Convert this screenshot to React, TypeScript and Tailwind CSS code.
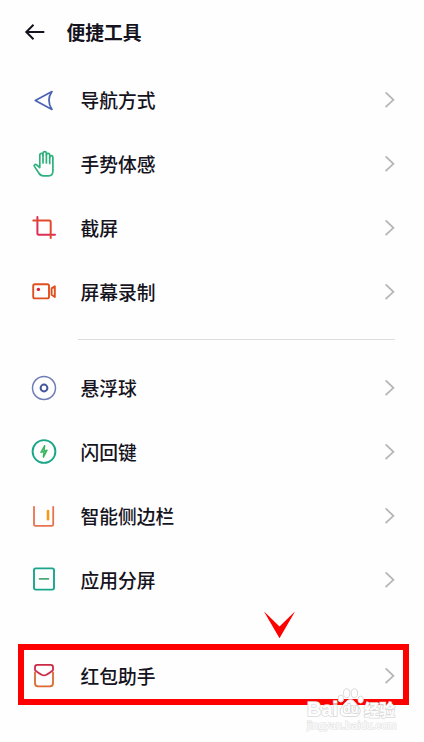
import type { ReactNode } from "react";

type Item = { label: string; icon: ReactNode };

const NAV_ITEMS: Item[] = [
    {
        label: "导航方式",
        icon: <path d="M5.3 14.4 22 5.6Q15.8 14.4 22 23.4Z" stroke="#4a62b5" strokeWidth={1.7} />,
    },
    {
        label: "手势体感",
        icon: (
            <g stroke="#2fb07c" strokeWidth={1.7}>
                <path d="M9.8 17.5V5a1.6 1.6 0 0 1 3.2 0v-1.6a1.7 1.7 0 0 1 3.4 0V5a1.6 1.6 0 0 1 3.3 0v2.2a1.6 1.6 0 0 1 3.2 0V21c0 3-1.6 4.8-4.2 4.8h-5.2c-2.2 0-3.6-.9-4.7-2.8L4.4 16.4c-.8-1.5 1-2.6 2.2-1.5z" />
                <path d="M13 5v8M16.4 5v8M19.7 7v6.5" />
            </g>
        ),
    },
    {
        label: "截屏",
        icon: (
            <g strokeWidth={2}>
                <path d="M7.4 3v16.6q0 1.2 1.2 1.2H25" stroke="#dc2f55" />
                <path d="M3.3 6.6h16.2q1.2 0 1.2 1.2V24" stroke="#e04a2c" />
            </g>
        ),
    },
    {
        label: "屏幕录制",
        icon: (
            <g stroke="#e0501f" strokeWidth={1.9}>
                <rect x={3.2} y={6.2} width={15.8} height={14.2} rx={1.6} />
                <path d="M24.8 8.2v10.8l-3.2-2.2v-6.4z" />
                <circle cx={8.4} cy={11.4} r={1.7} fill="#d9232e" stroke="none" />
            </g>
        ),
    },
];

const TOOL_ITEMS: Item[] = [
    {
        label: "悬浮球",
        icon: (
            <>
                <circle cx={14} cy={14} r={11.5} stroke="#6f7fb5" strokeWidth={1.5} />
                <circle cx={14} cy={14} r={3.4} stroke="#43569c" strokeWidth={2} />
            </>
        ),
    },
    {
        label: "闪回键",
        icon: (
            <>
                <circle cx={14} cy={13.5} r={11.4} stroke="#1aa687" strokeWidth={1.9} />
                <path d="M14.6 7.8 11 14.4 17 12.2 13.4 19.2M14.6 7.8 14 13M13.4 19.2 14 14" stroke="#3cb55f" strokeWidth={1.5} />
            </>
        ),
    },
    {
        label: "智能侧边栏",
        icon: (
            <>
                <path d="M4 4.8v17.4q0 1.6 1.6 1.6h16q1.6 0 1.6-1.6V4.8" stroke="#e87352" strokeWidth={1.8} />
                <path d="M18 9v8.2" stroke="#f59a14" strokeWidth={2.6} />
            </>
        ),
    },
    {
        label: "应用分屏",
        icon: (
            <>
                <rect x={4} y={2.4} width={20} height={21.2} rx={1.8} stroke="#1ba58b" strokeWidth={1.9} />
                <path d="M9.5 12.9h9" stroke="#4aa878" strokeWidth={1.6} />
            </>
        ),
    },
];

const RED_PACKET: Item = {
    label: "红包助手",
    icon: (
        <g strokeWidth={1.8}>
            <path d="M5 10.4v10.9q0 3 3 3h12q3 0 3-3V10.4" stroke="#d96a32" />
            <path d="M5 8V5.2Q5 2.8 7.4 2.8h13.2Q23 2.8 23 5.2V8q-1 1.4-6.6 4.8-2.4 1.2-4.8 0Q6 9.4 5 8z" stroke="#cc2946" />
        </g>
    ),
};

function Row({ item }: { item: Item }) {
    return (
        <>
            <svg className="h-7 w-7 shrink-0" viewBox="0 0 28 28" fill="none" strokeLinecap="round" strokeLinejoin="round">
                {item.icon}
            </svg>
            <span className="mb-px ml-[22.5px] flex-1 leading-7">{item.label}</span>
            <svg className="h-5 w-3 shrink-0" viewBox="0 0 12 20" fill="none" stroke="#b4b4b8" strokeWidth={1.7}>
                <path d="M2.6 2.4 10.4 9.8 2.6 17.2" />
            </svg>
        </>
    );
}

function Section({ items }: { items: Item[] }) {
    return (
        <ul>
            {items.map((item) => (
                <li key={item.label} className="flex h-16 items-center pr-[29px] pl-[30px]">
                    <Row item={item} />
                </li>
            ))}
        </ul>
    );
}

function Watermark() {
    return (
        <div className="absolute top-[686px] left-[306px] h-[48px] w-[94px] font-['Liberation_Sans',sans-serif] text-white [paint-order:stroke_fill]">
            <svg className="absolute top-px left-[31px] h-[31px] w-[27px] [paint-order:normal]" viewBox="0 0 28 32" fill="#ffffff" stroke="#d6d6d6" strokeWidth={1}>
                <ellipse cx={4} cy={12} rx={2.8} ry={3.6} />
                <ellipse cx={10} cy={6.4} rx={3.3} ry={4.6} />
                <ellipse cx={18} cy={6.4} rx={3.3} ry={4.6} />
                <ellipse cx={24.5} cy={13} rx={2.8} ry={3.6} />
                <path d="M14 13c3.5 0 5 3.5 8 6.5 3.6 3.8 2.4 11-3.2 11H8.5C3 30.5 1.6 24 5.5 19.5c3-3 5-6.5 8.5-6.5z" />
            </svg>
            <span className="absolute top-[13px] left-px text-[20px] leading-5 font-bold [-webkit-text-stroke:1.6px_#dadada]">Bai</span>
            <span className="absolute top-[15px] left-[37px] text-[12.5px] leading-4 font-bold [-webkit-text-stroke:1.6px_#d4d4d4]">du</span>
            <span className="absolute top-[13px] left-[58px] font-['Noto_Sans_CJK_SC',sans-serif] text-[15.5px] leading-5 font-bold [-webkit-text-stroke:1.5px_#dadada]">经验</span>
            <span className="absolute top-[33px] left-px text-[11px] leading-[12px] tracking-[0.05px] [-webkit-text-stroke:1.2px_#e2e2e2]">jingyan.baidu.com</span>
        </div>
    );
}

export default function App() {
    return (
        <main className="relative h-[742px] w-[424px] overflow-hidden bg-[#fefefe] font-['Noto_Sans_CJK_SC',sans-serif] text-[18.75px] font-medium text-[#15131d]">
            {/* Header */}
            <header className="flex h-[68px] items-start pt-[18px] pl-6">
                <svg className="h-7 w-[22px]" viewBox="0 0 22 28" fill="none" stroke="#15131d" strokeWidth={2}>
                    <path d="M20.3 14H2.5M9.5 6.8 2.3 14l7.2 7.2" />
                </svg>
                <h1 className="ml-[20.5px] leading-7 font-bold">便捷工具</h1>
            </header>

            <Section items={NAV_ITEMS} />
            <div className="mt-[15px] mr-[29px] mb-4 ml-[78px] h-px bg-[#dddddd]" />
            <Section items={TOOL_ITEMS} />

            {/* Red packet, highlighted */}
            <div className="h-8 pl-[263px]">
                <svg className="h-[27px] w-[33px]" viewBox="0 0 33 27" fill="#fe0000">
                    <path d="M.8-.8 16.5 14.5 32.2-.8 16.5 26.3z" />
                </svg>
            </div>
            <div className="mr-[15px] ml-[18px] flex h-[61px] items-center border-6 border-[#fe0000] pt-[3px] pr-2 pl-1.5">
                <Row item={RED_PACKET} />
            </div>

            <Watermark />
        </main>
    );
}
